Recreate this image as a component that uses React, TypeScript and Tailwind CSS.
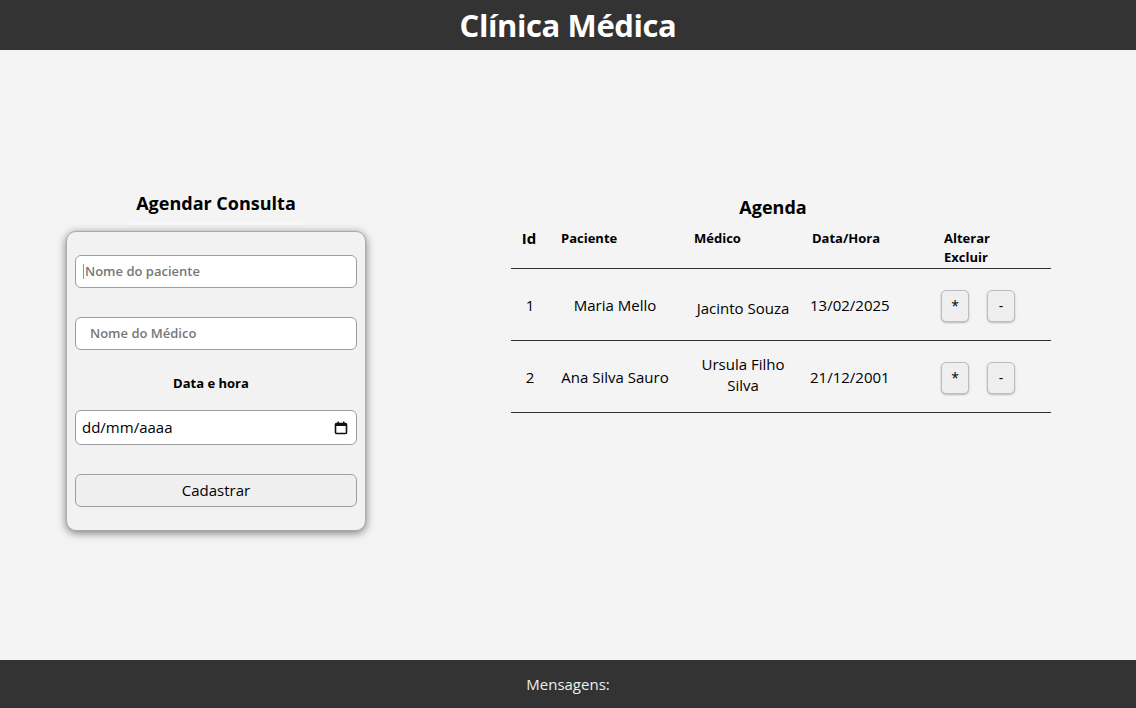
import React from "react";

const font = { fontFamily: '"Open Sans", "Noto Sans", sans-serif' };

function CalendarIcon() {
  return (
    <svg width="14" height="14" viewBox="0 0 14 14" className="shrink-0">
      <rect x="1.5" y="2.5" width="11" height="10" rx="1" fill="none" stroke="#111" strokeWidth="1.6" />
      <rect x="1.5" y="2.5" width="11" height="2.5" fill="#111" />
      <rect x="3.5" y="0.5" width="1.5" height="2.5" fill="#111" />
      <rect x="9" y="0.5" width="1.5" height="2.5" fill="#111" />
    </svg>
  );
}

function ActionBtn({ label }: { label: string }) {
  return (
    <div className="w-[28px] h-[32px] rounded-[5px] border border-[#bdbdbd] bg-[#efefef] shadow-[0_1px_2px_rgba(0,0,0,0.25)] flex items-center justify-center text-[14px] text-black">
      {label}
    </div>
  );
}

export default function App() {
  const rows = [
    { id: "1", pac: "Maria Mello", med: ["Jacinto Souza"], data: "13/02/2025", medCls: "pt-[6px]" },
    { id: "2", pac: "Ana Silva Sauro", med: ["Ursula Filho", "Silva"], data: "21/12/2001", medCls: "mt-[-6px]" },
  ];
  return (
    <div style={font} className="w-[1136px] h-[708px] flex flex-col bg-[#f4f4f4] text-black">
      <header className="h-[50px] bg-[#333333] flex items-center justify-center">
        <h1 className="text-white font-bold text-[31px] tracking-[-0.4px] leading-none">Clínica Médica</h1>
      </header>
      <main className="flex-1 flex items-start">
        {/* left */}
        <div className="w-[300px] ml-[66px] mt-[141px] flex flex-col items-center">
          <div className="w-[174px] h-[34px] flex items-start justify-center border-b-[3px] border-[#f8f8f8]">
            <h2 className="font-bold text-[18px] leading-[24px]">Agendar Consulta</h2>
          </div>
          <div className="mt-[6px] w-[300px] h-[300px] rounded-[10px] border border-[#aaaaaa] bg-[#f2f2f2] shadow-[0_2px_8px_rgba(0,0,0,0.5)] px-[8px] pt-[23px]">
            <div className="h-[33px] rounded-[6px] border border-[#9e9e9e] bg-white flex items-center pl-[7px] text-[13px] font-semibold text-[#777]">
              <span className="w-px h-[15px] bg-[#c58a3a] mr-[1px]" />
              Nome do paciente
            </div>
            <div className="mt-[29px] h-[33px] rounded-[6px] border border-[#9e9e9e] bg-white flex items-center pl-[14px] text-[13px] font-semibold text-[#777]">
              Nome do Médico
            </div>
            <div className="mt-[24px] text-center font-bold text-[13px] leading-[18px] pr-[10px]">Data e hora</div>
            <div className="mt-[18px] h-[35px] rounded-[6px] border border-[#9e9e9e] bg-white flex items-center justify-between pl-[6px] pr-[8px] text-[15px]">
              <span>dd/mm/aaaa</span>
              <CalendarIcon />
            </div>
            <div className="mt-[29px] h-[33px] rounded-[6px] border border-[#9e9e9e] bg-[#efefef] flex items-center justify-center text-[15px]">
              Cadastrar
            </div>
          </div>
        </div>
        {/* right */}
        <div className="ml-[145px] mt-[145px] w-[540px] flex flex-col">
          <h2 className="text-center font-bold text-[18px] leading-[24px] pr-[16px]">Agenda</h2>
          <div className="mt-[9px] grid grid-cols-[36px_136px_120px_132px_116px] h-[41px] border-b border-[#333] font-bold text-[13px] leading-[19px]">
            <div className="text-center text-[15px] leading-[20px]">Id</div>
            <div className="pl-[14px] pt-[1px]">Paciente</div>
            <div className="pl-[11px] pt-[1px]">Médico</div>
            <div className="pl-[9px] pt-[1px]">Data/Hora</div>
            <div className="pl-[9px] pt-[1px]">Alterar<br />Excluir</div>
          </div>
          {rows.map((r) => (
            <div key={r.id} className="grid grid-cols-[36px_136px_120px_132px_116px] h-[72px] border-b border-[#333] items-center text-[15px] leading-[21px] pt-[2px]">
              <div className="text-center pl-[2px]">{r.id}</div>
              <div className="text-center">{r.pac}</div>
              <div className={"text-center " + r.medCls}>
                {r.med.map((m) => (
                  <div key={m}>{m}</div>
                ))}
              </div>
              <div className="pl-[7px]">{r.data}</div>
              <div className="pl-[6px] flex gap-[18px]">
                <ActionBtn label="*" />
                <ActionBtn label="-" />
              </div>
            </div>
          ))}
        </div>
      </main>
      <footer className="h-[48px] bg-[#333333] flex items-center justify-center text-[#eeeeee] text-[15px]">
        Mensagens:
      </footer>
    </div>
  );
}
